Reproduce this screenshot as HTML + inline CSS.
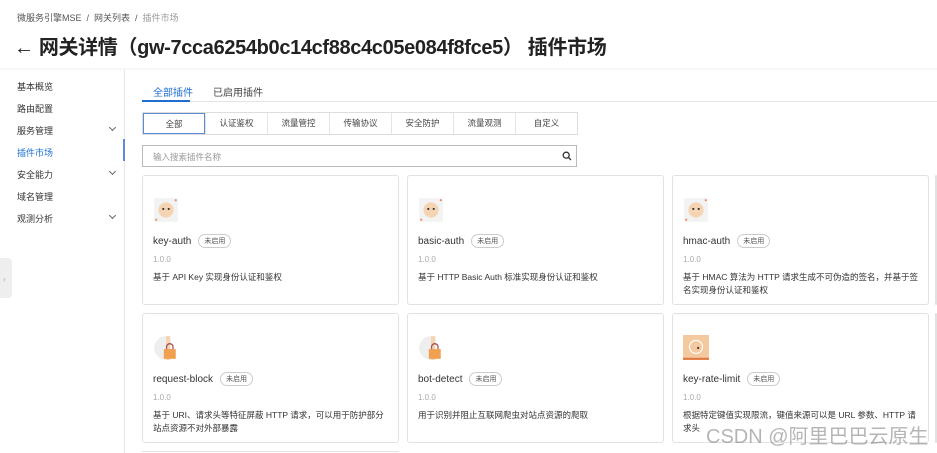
<!DOCTYPE html>
<html style="width:937px;height:453px;overflow:hidden"><head><meta charset="utf-8"><style>
*{box-sizing:border-box;margin:0;padding:0}
body{width:937px;height:453px;overflow:hidden;background:#fff;font-family:"Liberation Sans","Noto Sans CJK SC",sans-serif;color:#333;position:relative}
.abs{position:absolute}
.bc{left:17px;top:11px;font-size:9px;color:#555}
.bc span{color:#999}
.title{left:14px;top:31px;font-size:20px;font-weight:bold;color:#222;white-space:nowrap;letter-spacing:-0.35px}
.hdrline{left:0;top:68px;width:937px;height:3px;background:linear-gradient(#f3f3f3,#fff)}
.side{left:0;top:70px;width:125px;height:383px;border-right:1px solid #e6e6e6}
.si{position:absolute;left:17px;font-size:9px;color:#333}
.si.a{color:#1f6fd0}
.chev{position:absolute;left:110px;width:5px;height:5px;border-right:1px solid #666;border-bottom:1px solid #666;transform:rotate(45deg)}
.ind{left:123px;top:139px;width:2px;height:22px;background:#5b8bd8}
.tab{top:84px;font-size:10px}
.tabline{left:142px;top:101px;width:795px;height:1px;background:#e4e4e4}
.ul{left:142px;top:100px;width:48px;height:2px;background:#1f6fd0}
.filt{left:142px;top:112px;height:23px;display:flex;border:1px solid #ddd}
.filt div{width:62px;font-size:8.5px;text-align:center;line-height:21px;border-left:1px solid #e4e4e4;color:#444}
.filt div:first-child{border:1px solid #5b8bd8;border-left:1px solid #5b8bd8}
.search{left:142px;top:145px;width:435px;height:22px;border:1px solid #bbb;font-size:8.5px;color:#999;padding:5px 10px}
.card{position:absolute;width:257px;height:130px;border:1px solid #e2e2e2;border-radius:3px}
.card .ic{position:absolute;left:10px;top:21px;width:26px;height:26px}
.card .nm{position:absolute;left:10px;top:58px;font-size:10px;color:#333}
.card .tg{display:inline-block;margin-left:7px;font-size:7px;border:1px solid #ccc;border-radius:8px;padding:1px 5px;color:#555;vertical-align:1px}
.card .v{position:absolute;left:10px;top:79px;font-size:8px;color:#aaa}
.card .d{position:absolute;left:10px;top:95px;right:10px;font-size:8.5px;line-height:13px;color:#333}
.wm{left:706px;top:420px;font-size:20px;color:rgba(120,120,120,.55);white-space:nowrap}
</style></head><body>
<div class="abs bc">微服务引擎MSE &nbsp;/&nbsp; 网关列表 &nbsp;/&nbsp; <span>插件市场</span></div>
<div class="abs title">← 网关详情（gw-7cca6254b0c14cf88c4c05e084f8fce5） 插件市场</div>
<div class="abs hdrline"></div>
<div class="abs side">
<div class="si" style="top:10px">基本概览</div>
<div class="si" style="top:32px">路由配置</div>
<div class="si" style="top:54px">服务管理</div><div class="chev" style="top:55px"></div>
<div class="si a" style="top:76px">插件市场</div>
<div class="si" style="top:98px">安全能力</div><div class="chev" style="top:99px"></div>
<div class="si" style="top:120px">域名管理</div>
<div class="si" style="top:142px">观测分析</div><div class="chev" style="top:143px"></div>
</div>
<div class="abs ind"></div>
<div class="abs" style="left:0;top:258px;width:12px;height:40px;background:#eee;border-radius:0 4px 4px 0"></div>
<div class="abs" style="left:3px;top:275px;font-size:8px;color:#aaa">›</div>
<div class="abs tab" style="left:153px;color:#1f6fd0">全部插件</div>
<div class="abs tab" style="left:213px;color:#444">已启用插件</div>
<div class="abs tabline"></div><div class="abs ul"></div>
<div class="abs filt"><div>全部</div><div>认证鉴权</div><div>流量管控</div><div>传输协议</div><div>安全防护</div><div>流量观测</div><div>自定义</div></div>
<div class="abs search">输入搜索插件名称<svg style="position:absolute;right:4px;top:5px" width="10" height="10" viewBox="0 0 10 10"><circle cx="4.2" cy="4.2" r="3" fill="none" stroke="#333" stroke-width="1.3"/><path d="M6.5 6.5L9 9" stroke="#333" stroke-width="1.3"/></svg></div>

<div class="card" style="left:142px;top:175px"><svg class="ic" viewBox="0 0 24 24"><rect x="1" y="1" width="22" height="22" fill="#f3f3f3"/><circle cx="12" cy="12" r="7" fill="#f5d4b4"/><circle cx="9.5" cy="11" r="1" fill="#333"/><circle cx="14.5" cy="11" r="1" fill="#333"/><circle cx="3" cy="21" r="1" fill="#e86"/><circle cx="21" cy="3" r="1" fill="#e86"/></svg><div class="nm">key-auth<span class="tg">未启用</span></div><div class="v">1.0.0</div><div class="d">基于 API Key 实现身份认证和鉴权</div></div>
<div class="card" style="left:407px;top:175px"><svg class="ic" viewBox="0 0 24 24"><rect x="1" y="1" width="22" height="22" fill="#f3f3f3"/><circle cx="12" cy="12" r="7" fill="#f5d4b4"/><circle cx="9.5" cy="11" r="1" fill="#333"/><circle cx="14.5" cy="11" r="1" fill="#333"/><circle cx="3" cy="21" r="1" fill="#e86"/><circle cx="21" cy="3" r="1" fill="#e86"/></svg><div class="nm">basic-auth<span class="tg">未启用</span></div><div class="v">1.0.0</div><div class="d">基于 HTTP Basic Auth 标准实现身份认证和鉴权</div></div>
<div class="card" style="left:672px;top:175px"><svg class="ic" viewBox="0 0 24 24"><rect x="1" y="1" width="22" height="22" fill="#f3f3f3"/><circle cx="12" cy="12" r="7" fill="#f5d4b4"/><circle cx="9.5" cy="11" r="1" fill="#333"/><circle cx="14.5" cy="11" r="1" fill="#333"/><circle cx="3" cy="21" r="1" fill="#e86"/><circle cx="21" cy="3" r="1" fill="#e86"/></svg><div class="nm">hmac-auth<span class="tg">未启用</span></div><div class="v">1.0.0</div><div class="d">基于 HMAC 算法为 HTTP 请求生成不可伪造的签名，并基于签名实现身份认证和鉴权</div></div>
<div class="card" style="left:935px;top:175px;width:2px"></div>

<div class="card" style="left:142px;top:313px"><svg class="ic" viewBox="0 0 24 24"><path d="M12 1A11 11 0 0 0 12 23Z" fill="#eee"/><path d="M12 1h4v22h-4z" fill="#f5d4b4"/><rect x="10" y="13" width="11" height="9" fill="#f0a050"/><path d="M12.5 13v-2a3 3 0 0 1 6 0v2" fill="none" stroke="#a55" stroke-width="1.2"/></svg><div class="nm">request-block<span class="tg">未启用</span></div><div class="v">1.0.0</div><div class="d">基于 URI、请求头等特征屏蔽 HTTP 请求，可以用于防护部分站点资源不对外部暴露</div></div>
<div class="card" style="left:407px;top:313px"><svg class="ic" viewBox="0 0 24 24"><path d="M12 1A11 11 0 0 0 12 23Z" fill="#eee"/><path d="M12 1h4v22h-4z" fill="#f5d4b4"/><rect x="10" y="13" width="11" height="9" fill="#f0a050"/><path d="M12.5 13v-2a3 3 0 0 1 6 0v2" fill="none" stroke="#a55" stroke-width="1.2"/></svg><div class="nm">bot-detect<span class="tg">未启用</span></div><div class="v">1.0.0</div><div class="d">用于识别并阻止互联网爬虫对站点资源的爬取</div></div>
<div class="card" style="left:672px;top:313px"><svg class="ic" viewBox="0 0 24 24"><rect x="0" y="0" width="24" height="22" fill="#f5c9a0"/><rect x="0" y="21" width="24" height="2" fill="#e07a40"/><circle cx="12" cy="11" r="6" fill="none" stroke="#fff" stroke-width="1"/><circle cx="14" cy="12" r="1" fill="#333"/></svg><div class="nm">key-rate-limit<span class="tg">未启用</span></div><div class="v">1.0.0</div><div class="d">根据特定键值实现限流，键值来源可以是 URL 参数、HTTP 请求头</div></div>
<div class="card" style="left:935px;top:313px;width:2px"></div>
<div class="abs" style="left:142px;top:451px;width:257px;height:1px;background:#e2e2e2"></div>
<div class="abs wm">CSDN @阿里巴巴云原生</div>
</body></html>
